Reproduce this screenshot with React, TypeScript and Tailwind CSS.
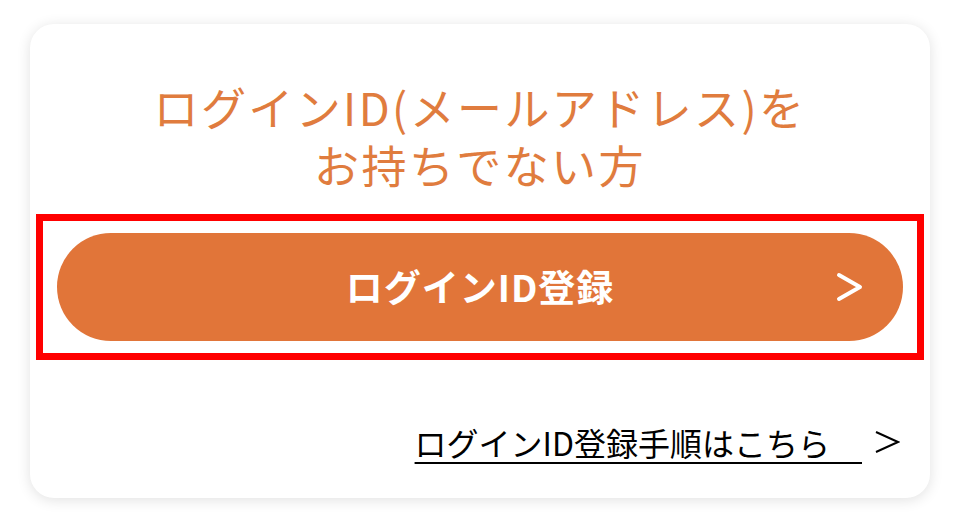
export default function App() {
  return (
    <div
      className="w-[960px] h-[521px] bg-white pt-[24px] pl-[30px]"
      style={{ fontFamily: '"Noto Sans CJK JP", "Noto Sans", sans-serif' }}
    >
      <div className="w-[900px] h-[474px] bg-white rounded-[24px] shadow-[0_2px_14px_rgba(0,0,0,0.12)] px-[6px] flex flex-col">
        <h2 className="mt-[54px] flex flex-col items-center text-[45px] leading-[58px] tracking-[2.4px] text-[#e07c3e] font-normal">
          <span>ログインID(メールアドレス)を</span>
          <span>お持ちでない方</span>
        </h2>
        <div className="mt-[20px] border-[7px] border-[#ff0000] px-[14px] py-[12px]">
          <button className="w-full h-[108px] rounded-full bg-[#e17539] flex items-center justify-center relative text-white font-bold text-[37px] tracking-[1px]">
            ログインID登録
            <span className="absolute right-[40px] top-1/2 -translate-y-1/2">
              <svg width="27" height="30" viewBox="0 0 27 30" fill="none">
                <path d="M3 3 L24 15 L3 27" stroke="white" strokeWidth="4" strokeLinecap="round" strokeLinejoin="round" />
              </svg>
            </span>
          </button>
        </div>
        <div className="mt-[58px] flex items-center justify-end pr-[24px] text-[32px] text-black">
          <a className="underline underline-offset-[6px] decoration-[2px]">ログインID登録手順はこちら{'\u3000'}</a>
          <svg className="ml-[12px]" width="26" height="24" viewBox="0 0 26 24" fill="none">
            <path d="M2 2 L24 12 L2 22" stroke="black" strokeWidth="2" strokeLinejoin="miter" />
          </svg>
        </div>
      </div>
    </div>
  );
}
